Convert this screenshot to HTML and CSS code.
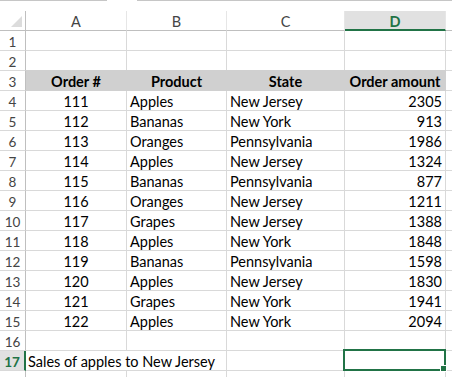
FILE: index.html
```html
<!DOCTYPE html>
<html lang="en">
<head>
  <meta charset="UTF-8" />
  <title>Orders</title>
  <link rel="stylesheet" href="styles.css">
</head>
<body>
  <div class="topbar">
    <div class="seg first"></div>
    <div class="gap"></div>
    <div class="seg rest"></div>
  </div>

  <div class="row head">
    <div class="corner"><span class="tri"></span></div>
    <div>A</div>
    <div>B</div>
    <div>C</div>
    <div class="active">D</div>
    <div></div>
  </div>

  <div class="row"><div class="rh">1</div><div></div><div></div><div></div><div></div><div></div></div>
  <div class="row"><div class="rh">2</div><div></div><div></div><div></div><div></div><div></div></div>
  <div class="row titles">
    <div class="rh">3</div>
    <div>Order #</div>
    <div>Product</div>
    <div>State</div>
    <div>Order amount</div>
    <div></div>
  </div>

  <div class="row"><div class="rh">4</div><div class="c">111</div><div>Apples</div><div>New Jersey</div><div class="r">2305</div><div></div></div>
  <div class="row"><div class="rh">5</div><div class="c">112</div><div>Bananas</div><div>New York</div><div class="r">913</div><div></div></div>
  <div class="row"><div class="rh">6</div><div class="c">113</div><div>Oranges</div><div>Pennsylvania</div><div class="r">1986</div><div></div></div>
  <div class="row"><div class="rh">7</div><div class="c">114</div><div>Apples</div><div>New Jersey</div><div class="r">1324</div><div></div></div>
  <div class="row"><div class="rh">8</div><div class="c">115</div><div>Bananas</div><div>Pennsylvania</div><div class="r">877</div><div></div></div>
  <div class="row"><div class="rh">9</div><div class="c">116</div><div>Oranges</div><div>New Jersey</div><div class="r">1211</div><div></div></div>
  <div class="row"><div class="rh">10</div><div class="c">117</div><div>Grapes</div><div>New Jersey</div><div class="r">1388</div><div></div></div>
  <div class="row"><div class="rh">11</div><div class="c">118</div><div>Apples</div><div>New York</div><div class="r">1848</div><div></div></div>
  <div class="row"><div class="rh">12</div><div class="c">119</div><div>Bananas</div><div>Pennsylvania</div><div class="r">1598</div><div></div></div>
  <div class="row"><div class="rh">13</div><div class="c">120</div><div>Apples</div><div>New Jersey</div><div class="r">1830</div><div></div></div>
  <div class="row"><div class="rh">14</div><div class="c">121</div><div>Grapes</div><div>New York</div><div class="r">1941</div><div></div></div>
  <div class="row"><div class="rh">15</div><div class="c">122</div><div>Apples</div><div>New York</div><div class="r">2094</div><div></div></div>
  <div class="row"><div class="rh">16</div><div></div><div></div><div></div><div></div><div></div></div>

  <div class="row">
    <div class="rh sel">17</div>
    <div class="wide">Sales of apples to New Jersey</div>
    <div></div>
    <div class="current"><span class="handle"></span></div>
    <div></div>
  </div>

  <div class="row"><div class="rh"></div><div></div><div></div><div></div><div></div><div></div></div>
</body>
</html>
```

FILE: styles.css
```css
body {
  margin: 0;
  font-family: Lato, "Liberation Sans", sans-serif;
  font-size: 14.5px;
  color: #000;
  background: #fff;
  overflow: hidden;
}

.topbar {
  display: flex;
  height: 11px;
}
.topbar .seg {
  border-top: 1px solid #c6c6c6;
}
.topbar .first { width: 107px; }
.topbar .gap { width: 30px; }
.topbar .rest { flex: 1; }

.row {
  display: grid;
  grid-template-columns: 26px 101px 100px 118px 101px 1fr;
  height: 20px;
}
.row > div {
  box-sizing: border-box;
  height: 20px;
  border-right: 1px solid #d9d9d9;
  border-bottom: 1px solid #d9d9d9;
  padding: 3px 3px 0 3px;
  line-height: 16px;
  white-space: nowrap;
}

.rh {
  text-align: center;
  color: #444;
  font-size: 13.5px;
  padding: 3px 0 0 0 !important;
  border-right-color: #bfbfbf !important;
}
.rh.sel {
  background: #e1e1e1;
  color: #217346;
  font-weight: bold;
  border-right: 2px solid #217346 !important;
}

.c { text-align: center; }
.r { text-align: right; }

.head > div {
  text-align: center;
  color: #444;
  border-right-color: #e6e6e6;
  border-bottom-color: #bfbfbf;
}
.head .corner {
  position: relative;
  border-right-color: #bfbfbf;
}
.tri {
  position: absolute;
  right: 3px;
  bottom: 3px;
  width: 0;
  height: 0;
  border-left: 11px solid transparent;
  border-bottom: 11px solid #dcdcdc;
}
.head .active {
  background: #e1e1e1;
  color: #217346;
  font-weight: bold;
  border-bottom: 2px solid #217346;
}

.titles > div:not(.rh):not(:last-child) {
  background: #d0d0d0;
  border-color: #d0d0d0;
  box-shadow: 0 -1px 0 #d0d0d0;
  font-weight: bold;
  text-align: center;
}

.wide {
  grid-column: span 2;
  padding-left: 2px !important;
}

.current {
  position: relative;
}
.current::before {
  content: "";
  position: absolute;
  left: -2px;
  top: -2px;
  right: -1px;
  bottom: -1px;
  border: 2px solid #217346;
}
.handle {
  position: absolute;
  right: -2px;
  bottom: -2px;
  width: 5px;
  height: 5px;
  background: #217346;
  border: 1px solid #fff;
}
```
